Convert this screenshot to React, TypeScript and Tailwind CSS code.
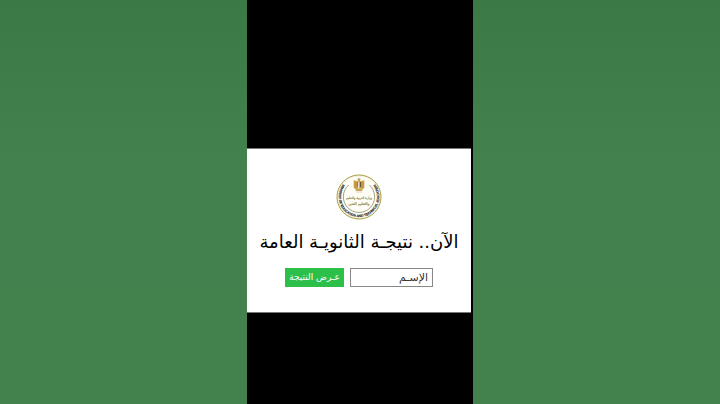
import React, { useState } from "react";
import type { FunctionComponent } from "react";

const MinistryEmblem: FunctionComponent = () => (
  <svg
    className="h-[46px] w-[46px]"
    viewBox="0 0 138 138"
    role="img"
    aria-label="Ministry of Education and Technical Education"
  >
    <defs>
      <path id="motto" d="M 28 23 A 61 61 0 1 0 110 23" />
    </defs>
    <circle cx="69" cy="69" r="66" fill="#fdfdf6" stroke="#a39b3c" strokeWidth="3" />
    <circle cx="69" cy="69" r="63" fill="none" stroke="#dcd8a4" strokeWidth="1" />
    {/* inner ring, open at the top for the eagle */}
    <path
      d="M 38 33 A 47 47 0 1 0 100 33"
      fill="none"
      stroke="#77764a"
      strokeWidth="2"
    />
    <text
      fontFamily="Liberation Sans, sans-serif"
      fontWeight="bold"
      fontSize="10"
      direction="ltr"
      fill="#22222c"
      stroke="#22222c"
      strokeWidth="0.4"
    >
      <textPath href="#motto" startOffset="50%" textAnchor="middle">
        MINISTRY OF EDUCATION AND TECHNICAL EDUCATION
      </textPath>
    </text>
    {/* eagle */}
    <path d="M 66 14 Q 69 10 72 14 L 74 18 L 71 20 L 72 24 H 66 L 67 20 L 64 17 Z" fill="#b9a050" />
    <path d="M 66 22 L 53 19 V 40 L 59 47 L 65 44 Z" fill="#d0a044" />
    <path d="M 72 22 L 85 19 V 40 L 79 47 L 73 44 Z" fill="#d0a044" />
    <path d="M 57 24 V 41 M 61 25 V 43 M 81 24 V 41 M 77 25 V 43" stroke="#a47a2c" strokeWidth="1" />
    <path d="M 64 24 H 67 V 42 L 64 39 Z" fill="#b54a3c" />
    <path d="M 67 24 H 71 V 43 H 67 Z" fill="#f3efdf" />
    <path d="M 71 24 H 74 V 39 L 71 42 Z" fill="#29272b" />
    <path d="M 61 46 L 69 42 L 77 46 L 80 51 H 58 Z" fill="#c9a653" />
    <path d="M 60 54 H 78" stroke="#cfc698" strokeWidth="2" />
    <g
      fontFamily="DejaVu Sans, sans-serif"
      fill="#8f8c52"
      stroke="#8f8c52"
      strokeWidth="0.6"
      textAnchor="middle"
      direction="rtl"
    >
      <text x="69" y="74" fontSize="9">
        وزارة التربية والتعليم
      </text>
      <text x="69" y="92" fontSize="11">
        والتعليم الفنى
      </text>
    </g>
  </svg>
);

const App: FunctionComponent = () => {
  const [name, setName] = useState("");

  const handleSubmit = (e: React.FormEvent<HTMLFormElement>) => {
    e.preventDefault();
  };

  return (
    <div
      dir="rtl"
      className="flex min-h-screen justify-center bg-linear-to-b from-[#3b7a46] via-[#43814e] via-40% to-[#43814d] font-['DejaVu_Sans',sans-serif]"
    >
      <div className="flex w-[226px] flex-col bg-black pr-0.5">
        <div className="grow-13" />
        <main className="flex flex-col items-center border-y border-[#777] bg-white pt-[25px] pb-[25px]">
          <MinistryEmblem />
          <h1 className="mt-2 text-[18px] leading-7 whitespace-nowrap text-black">
            الآن.. نتيجـة الثانويـة العامة
          </h1>
          <form onSubmit={handleSubmit} className="mt-3 flex gap-1.5">
            <input
              type="text"
              aria-label="الإسم"
              placeholder="الإسـم"
              value={name}
              onChange={(e) => setName(e.target.value)}
              className="h-[19px] w-[83px] border border-[#888] px-1 text-[11px] text-[#333] outline-none placeholder:text-[#333]"
            />
            <button
              type="submit"
              className="h-[19px] w-[59px] bg-[#2cc04a] text-[9px] whitespace-nowrap text-white"
            >
              عـرض النتيجة
            </button>
          </form>
        </main>
        <div className="grow-8" />
      </div>
    </div>
  );
};

export default App;
